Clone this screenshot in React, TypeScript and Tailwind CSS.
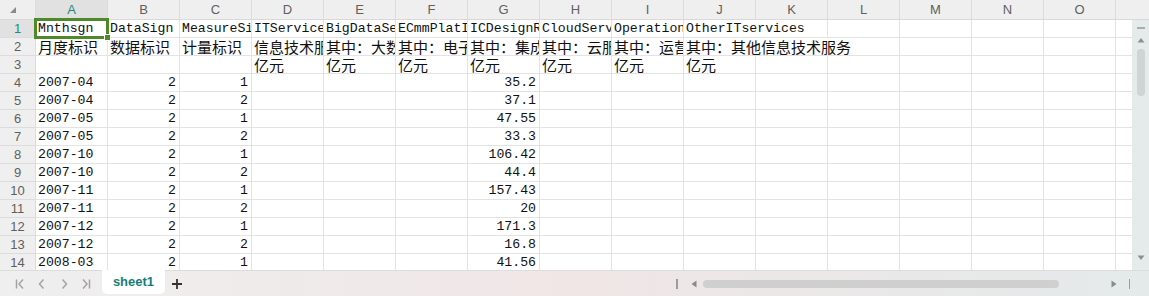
import React from "react";

const COLS = ["A", "B", "C", "D", "E", "F", "G", "H", "I", "J", "K", "L", "M", "N", "O"];

type CellDef = { t?: string; r?: boolean; cjk?: boolean; span?: number };

const row1: (CellDef | null)[] = [
  { t: "Mnthsgn" },
  { t: "DataSign" },
  { t: "MeasureSign" },
  { t: "ITServicesRev" },
  { t: "BigDataServ" },
  { t: "ECmmPlatInc" },
  { t: "ICDesignRev" },
  { t: "CloudServ" },
  { t: "OperationServ" },
  { t: "OtherITservices", span: 2 },
];
const row2: (CellDef | null)[] = [
  { t: "月度标识", cjk: true },
  { t: "数据标识", cjk: true },
  { t: "计量标识", cjk: true },
  { t: "信息技术服务收入", cjk: true },
  { t: "其中：大数据服务", cjk: true },
  { t: "其中：电子商务平台", cjk: true },
  { t: "其中：集成电路设计", cjk: true },
  { t: "其中：云服务", cjk: true },
  { t: "其中：运营服务", cjk: true },
  { t: "其中：其他信息技术服务", cjk: true, span: 3 },
];
const row3: (CellDef | null)[] = [
  {}, {}, {},
  { t: "亿元", cjk: true },
  { t: "亿元", cjk: true },
  { t: "亿元", cjk: true },
  { t: "亿元", cjk: true },
  { t: "亿元", cjk: true },
  { t: "亿元", cjk: true },
  { t: "亿元", cjk: true },
];

const data: [string, string, string, string][] = [
  ["2007-04", "2", "1", "35.2"],
  ["2007-04", "2", "2", "37.1"],
  ["2007-05", "2", "1", "47.55"],
  ["2007-05", "2", "2", "33.3"],
  ["2007-10", "2", "1", "106.42"],
  ["2007-10", "2", "2", "44.4"],
  ["2007-11", "2", "1", "157.43"],
  ["2007-11", "2", "2", "20"],
  ["2007-12", "2", "1", "171.3"],
  ["2007-12", "2", "2", "16.8"],
  ["2008-03", "2", "1", "41.56"],
];

function buildRows(): CellDef[][] {
  const rows: CellDef[][] = [];
  const pad = (arr: (CellDef | null)[]) => {
    const out: CellDef[] = [];
    let used = 0;
    for (const c of arr) {
      const cd = c || {};
      out.push(cd);
      used += cd.span || 1;
    }
    while (used < COLS.length) {
      out.push({});
      used++;
    }
    return out;
  };
  rows.push(pad(row1));
  rows.push(pad(row2));
  rows.push(pad(row3));
  for (const d of data) {
    rows.push(
      pad([
        { t: d[0] },
        { t: d[1], r: true },
        { t: d[2], r: true },
        {}, {}, {},
        { t: d[3], r: true },
      ])
    );
  }
  return rows;
}

const MONO = "font-['Liberation_Mono','DejaVu_Sans_Mono',monospace] text-[13.2px]";
const CJK = "font-['Noto_Sans_CJK_SC',sans-serif] text-[15px]";

function Cell({ c }: { c: CellDef }) {
  const w = (c.span || 1) * 72;
  return (
    <div
      className={`h-[18px] shrink-0 border-r border-b border-[#e3e3e3] overflow-hidden whitespace-nowrap flex items-center text-[#111] ${
        c.r ? "justify-end pr-[3px]" : "justify-start pl-[2px]"
      } ${c.cjk ? CJK : MONO}`}
      style={{ width: w }}
    >
      <span className="leading-none">{c.t || ""}</span>
    </div>
  );
}

function NavIcon({ kind }: { kind: "first" | "prev" | "next" | "last" }) {
  return (
    <svg width="12" height="12" viewBox="0 0 12 12" fill="none" stroke="#a3a3a3" strokeWidth="1.5">
      {kind === "first" && (
        <>
          <path d="M2.5 1.5v9" />
          <path d="M9 1.5L5 6l4 4.5" />
        </>
      )}
      {kind === "prev" && <path d="M7.5 1.5L3.5 6l4 4.5" />}
      {kind === "next" && <path d="M4.5 1.5l4 4.5-4 4.5" />}
      {kind === "last" && (
        <>
          <path d="M3 1.5L7 6l-4 4.5" />
          <path d="M9.5 1.5v9" />
        </>
      )}
    </svg>
  );
}

export default function App() {
  const rows = buildRows();
  return (
    <div className="relative w-[1149px] h-[296px] overflow-hidden bg-white flex flex-col select-none">
      {/* column header */}
      <div className="h-[20px] flex shrink-0 bg-[#efefef] border-b border-[#d9d9d9] font-['Liberation_Sans',Arial,sans-serif] text-[13px] text-[#5f5f5f]">
        <div className="w-[36px] shrink-0 border-r border-[#dcdcdc] flex items-end justify-end pr-[19px] pb-[6px]">
          <svg width="6" height="6" viewBox="0 0 6 6">
            <path d="M6 0V6H0Z" fill="#8a8a8a" />
          </svg>
        </div>
        {COLS.map((c, i) => (
          <div
            key={c}
            className={`w-[72px] shrink-0 border-r border-[#dcdcdc] flex items-center justify-center ${
              i === 0 ? "bg-[#e1e1e1] text-[#1b8a7e]" : ""
            }`}
          >
            {c}
          </div>
        ))}
        <div className="flex-1" />
      </div>

      {/* body */}
      <div className="flex h-[250px] shrink-0">
        <div className="w-[1132px] overflow-hidden">
          {rows.map((r, ri) => (
            <div key={ri} className="flex h-[18px]">
              <div
                className={`w-[36px] shrink-0 border-r border-b border-[#dcdcdc] flex items-center justify-center font-['Liberation_Sans',Arial,sans-serif] text-[13px] ${
                  ri === 0 ? "bg-[#e1e1e1] text-[#1b8a7e]" : "bg-[#efefef] text-[#5f5f5f]"
                }`}
              >
                {ri + 1}
              </div>
              {r.map((c, ci) => (
                <Cell key={ci} c={c} />
              ))}
              <div className="w-[16px] shrink-0 h-[18px] border-b border-[#e3e3e3]" />
            </div>
          ))}
        </div>
        {/* vertical scrollbar */}
        <div className="w-[17px] shrink-0 bg-[#e5eaea] flex flex-col items-center pt-[7px]">
          <div className="w-[8px] h-[1.5px] bg-[#a9adad]" />
          <svg width="8" height="6" viewBox="0 0 8 6" className="mt-[8px]">
            <path d="M4 1L7.5 5.5H0.5Z" fill="#8c9090" />
          </svg>
          <div className="w-[8px] h-[47px] rounded-full bg-[#cfd4d4] mt-[6px]" />
          <div className="flex-1" />
          <svg width="8" height="6" viewBox="0 0 8 6" className="mb-[9px]">
            <path d="M0.5 0.5H7.5L4 5Z" fill="#8c9090" />
          </svg>
        </div>
      </div>

      {/* bottom bar */}
      <div className="flex-1 flex items-stretch bg-gradient-to-r from-[#efefef] via-[#f0e6e6] to-[#e4eaea] border-t border-[#dcdcdc]">
        <div className="flex items-center gap-[10px] pl-[14px] w-[102px] shrink-0">
          <NavIcon kind="first" />
          <NavIcon kind="prev" />
          <NavIcon kind="next" />
          <NavIcon kind="last" />
        </div>
        <div className="w-[63px] mt-[-1px] mb-[2px] bg-white rounded-b-[5px] flex items-center justify-center font-['Liberation_Sans',Arial,sans-serif] text-[13px] font-bold text-[#167e78]">
          sheet1
        </div>
        <div className="ml-[6px] flex items-center">
          <svg width="12" height="12" viewBox="0 0 12 12" stroke="#333" strokeWidth="1.8">
            <path d="M6 1v10M1 6h10" />
          </svg>
        </div>
        <div className="flex-1" />
        <div className="flex items-center">
          <div className="w-[1.5px] h-[10px] bg-[#9c9c9c]" />
          <svg width="6" height="8" viewBox="0 0 6 8" className="ml-[13px]">
            <path d="M5.5 0.5V7.5L0.5 4Z" fill="#8a8a8a" />
          </svg>
          <div className="ml-[6px] w-[356px] h-[8px] rounded-full bg-[#cfcfcf]" />
          <div className="w-[52px]" />
          <svg width="6" height="8" viewBox="0 0 6 8">
            <path d="M0.5 0.5V7.5L5.5 4Z" fill="#8a8a8a" />
          </svg>
          <div className="ml-[12px] w-[1.5px] h-[10px] bg-[#9c9c9c]" />
        </div>
        <div className="w-[19px] shrink-0" />
      </div>

      {/* active cell selection overlay */}
      <div className="absolute left-[34px] top-[18px] w-[75px] h-[21px] border-[3px] border-solid border-[#4e8a2a] pointer-events-none" />
      <div className="absolute left-[104px] top-[34px] w-[7px] h-[7px] bg-[#4e8a2a] border border-solid border-white pointer-events-none" />
    </div>
  );
}
